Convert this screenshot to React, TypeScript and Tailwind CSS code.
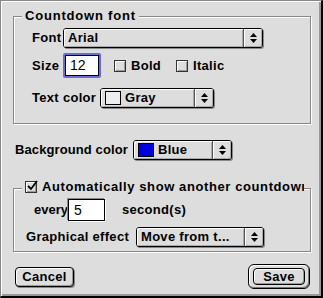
import React from 'react';

function Arrows() {
  return (
    <svg width="7" height="10" viewBox="0 0 7 10" className="block">
      <path d="M3.5 0 L7 4 L0 4 Z" fill="#000" />
      <path d="M0 6 L7 6 L3.5 10 Z" fill="#000" />
    </svg>
  );
}

function Popup({ className, children }: { className: string; children: React.ReactNode }) {
  return (
    <div
      className={`flex h-[20px] shrink-0 rounded-[3px] border border-black bg-[#dddddd] shadow-[1px_1px_0_#888888] ${className}`}
    >
      <div className="flex flex-1 items-center overflow-hidden whitespace-nowrap rounded-l-[2px] pl-[4px] shadow-[inset_1px_1px_0_#ffffff,inset_-1px_-1px_0_#aaaaaa]">
        {children}
      </div>
      <div className="flex w-[19px] items-center justify-center border-l border-[#555555] rounded-r-[2px] shadow-[inset_1px_1px_0_#ffffff,inset_-1px_-1px_0_#aaaaaa]">
        <Arrows />
      </div>
    </div>
  );
}

function Checkbox({ checked }: { checked?: boolean }) {
  return (
    <div className="relative h-[12px] w-[12px] shrink-0 border border-[#333333] bg-[#dddddd] shadow-[inset_1px_1px_0_#ffffff,inset_-1px_-1px_0_#999999]">
      {checked && (
        <svg width="12" height="12" viewBox="0 0 12 12" className="absolute left-[0px] top-[-2px]">
          <path d="M2 6 L5 9 L11 1" stroke="#000" strokeWidth="1.8" fill="none" />
        </svg>
      )}
    </div>
  );
}

function Swatch({ color }: { color: string }) {
  return <div className={`mr-[4px] h-[14px] w-[16px] shrink-0 border border-black ${color}`} />;
}

function Label({ className, children }: { className: string; children: React.ReactNode }) {
  return <span className={`shrink-0 whitespace-nowrap ${className}`}>{children}</span>;
}

export default function App() {
  return (
    <div className="font-['Liberation_Sans',Arial,sans-serif] text-[13px] font-bold tracking-[0.3px] text-black">
      <div className="h-[298px] w-[323px] border-l border-t border-[#888888] border-r-2 border-b-2 border-r-black border-b-black bg-[#dddddd] shadow-[inset_1px_1px_0_#ffffff,inset_-2px_-2px_0_#999999]">
        <div className="flex flex-col pl-[12px] pt-[15px]">
          {/* Countdown font */}
          <div className="relative h-[108px] w-[298px] border border-[#888888] shadow-[1px_1px_0_#ffffff,inset_1px_1px_0_#ffffff]">
            <div className="absolute left-[8px] top-[-9px] whitespace-nowrap bg-[#dddddd] px-[3px] leading-[16px] tracking-[0.8px]">
              Countdown font
            </div>
            <div className="flex flex-col pl-[18px] pt-[11px]">
              <div className="flex h-[20px] items-center">
                <Label className="w-[31px]">Font</Label>
                <Popup className="w-[200px]">Arial</Popup>
              </div>
              <div className="mt-[5px] flex h-[25px] items-center">
                <Label className="w-[31px]">Size</Label>
                <div className="flex h-[25px] w-[38px] shrink-0 items-center rounded-[2px] border-[2px] border-[#6b6bd6] bg-white shadow-[inset_0_0_0_1px_#000]">
                  <span className="pl-[5px] text-[14px] font-normal tracking-normal">12</span>
                </div>
                <div className="ml-[13px] flex w-[62px] shrink-0 items-center gap-[5px]">
                  <Checkbox />
                  <span>Bold</span>
                </div>
                <div className="flex items-center gap-[5px]">
                  <Checkbox />
                  <span>Italic</span>
                </div>
              </div>
              <div className="mt-[10px] flex h-[20px] items-center">
                <Label className="w-[68px]">Text color</Label>
                <Popup className="w-[114px]">
                  <Swatch color="bg-[#eeeeee]" />
                  Gray
                </Popup>
              </div>
            </div>
          </div>

          {/* Background color */}
          <div className="mt-[16px] flex h-[20px] items-center pl-[2px]">
            <Label className="w-[118px] tracking-[0.1px]">Background color</Label>
            <Popup className="w-[99px]">
              <Swatch color="bg-[#0000dd]" />
              Blue
            </Popup>
          </div>

          {/* Automatically show */}
          <div className="relative mt-[28px] h-[64px] w-[298px] border border-[#888888] shadow-[1px_1px_0_#ffffff,inset_1px_1px_0_#ffffff]">
            <div className="absolute left-[8px] top-[-10px] flex w-[282px] items-center gap-[5px] overflow-hidden whitespace-nowrap bg-[#dddddd] px-[3px] leading-[16px] tracking-[0.6px]">
              <Checkbox checked />
              <span>Automatically show another countdown</span>
            </div>
            <div className="flex flex-col pt-[10px]">
              <div className="flex h-[22px] items-center pl-[20px]">
                <Label className="w-[34px] tracking-normal">every</Label>
                <div className="flex h-[22px] w-[37px] shrink-0 items-center border border-black bg-white shadow-[-1px_-1px_0_#888888,1px_1px_0_#ffffff]">
                  <span className="pl-[5px] text-[14px] font-normal tracking-normal">5</span>
                </div>
                <Label className="ml-[17px]">second(s)</Label>
              </div>
              <div className="mt-[6px] flex h-[20px] items-center pl-[12px]">
                <Label className="w-[110px]">Graphical effect</Label>
                <Popup className="w-[128px]">Move from t...</Popup>
              </div>
            </div>
          </div>

          {/* Buttons */}
          <div className="mt-[12px] flex items-center justify-between pr-[11px]">
            <div className="ml-[2px] flex h-[20px] w-[59px] items-center justify-center rounded-[4px] border border-black bg-[#dddddd] shadow-[inset_1px_1px_0_#ffffff,inset_-1px_-1px_0_#999999,1px_1px_0_#888888]">
              Cancel
            </div>
            <div className="flex h-[25px] w-[62px] items-center justify-center rounded-[6px] border border-black bg-[#dddddd] shadow-[inset_1px_1px_0_#ffffff,inset_-1px_-1px_0_#777777]">
              <div className="flex h-[17px] w-[52px] items-center justify-center rounded-[4px] border border-black bg-[#dddddd] shadow-[inset_1px_1px_0_#ffffff,inset_-1px_-1px_0_#999999]">
                Save
              </div>
            </div>
          </div>
        </div>
      </div>
    </div>
  );
}
